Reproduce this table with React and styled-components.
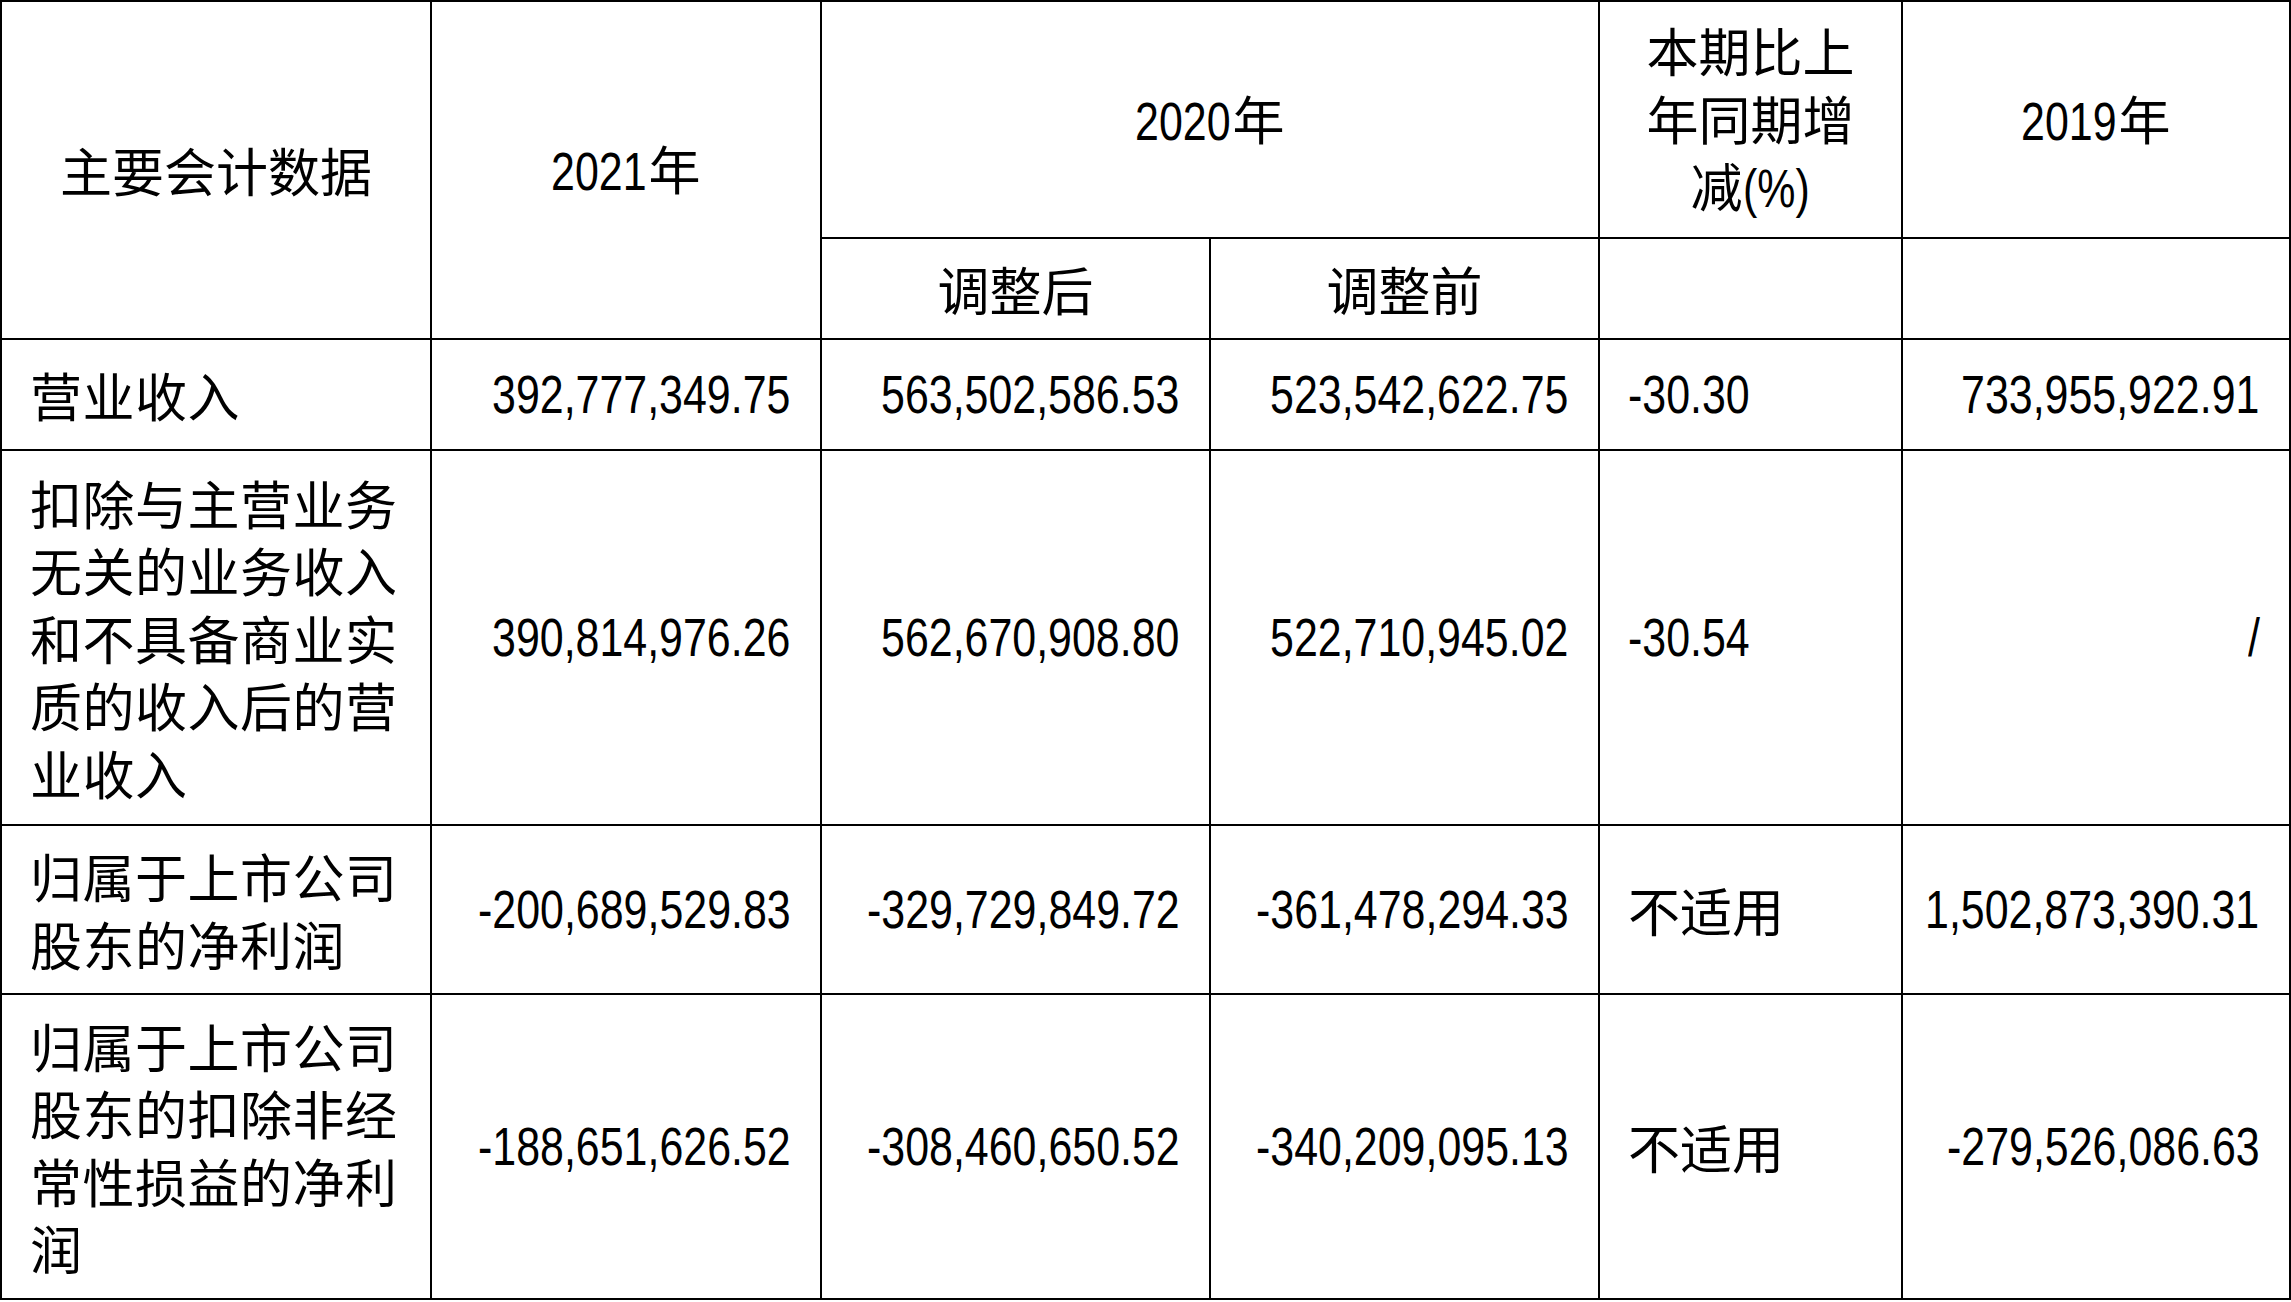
import React, { useLayoutEffect, useRef, useState } from 'react';
import styled, { createGlobalStyle } from 'styled-components';

const GlobalStyle = createGlobalStyle`
  html, body {
    margin: 0;
    padding: 0;
    background: #fff;
  }
  body {
    font-family: "Noto Sans CJK SC", sans-serif;
    color: #000;
  }
`;

const Sheet = styled.div`
  display: grid;
  grid-template-columns: 428px 388px 387px 387px 301px 386px;
  grid-template-rows: 235px 99px 109px 373px 167px 303px;
  gap: 2px;
  padding: 2px;
  background: #000;
  width: max-content;
`;

const justify = { left: 'flex-start', center: 'center', right: 'flex-end' };

const Cell = styled.div`
  background: #fff;
  display: flex;
  align-items: center;
  justify-content: ${p => justify[p.$align || 'left']};
  text-align: ${p => p.$align || 'left'};
  padding: ${p => (p.$label ? '0 20px 0 28px' : '0 28px')};
  grid-column: ${p => p.$col || 'auto'};
  grid-row: ${p => p.$row || 'auto'};
  font-size: 52px;
  line-height: 67.5px;
`;

const Label = styled.span`
  letter-spacing: 0.5px;
`;

// Arial Narrow look: Liberation Sans squeezed horizontally
const SQUEEZE = 0.81;

const NarrowBox = styled.span`
  display: inline-block;
  white-space: nowrap;
  font-family: "Liberation Sans", Arial, sans-serif;
  font-size: 53px;
  vertical-align: baseline;
`;

const NarrowInner = styled.span`
  display: inline-block;
  transform: scaleX(${SQUEEZE});
  transform-origin: left center;
`;

const Narrow = ({ children }) => {
  const ref = useRef(null);
  const [width, setWidth] = useState(null);
  useLayoutEffect(() => {
    // bounding rect already includes the scaleX transform
    if (ref.current) setWidth(Math.ceil(ref.current.getBoundingClientRect().width) + 1);
  }, [children]);
  return (
    <NarrowBox style={width ? { width } : undefined}>
      <NarrowInner ref={ref}>{children}</NarrowInner>
    </NarrowBox>
  );
};

const rows = [
  {
    label: '营业收入',
    values: ['392,777,349.75', '563,502,586.53', '523,542,622.75'],
    change: '-30.30',
    prior: '733,955,922.91',
  },
  {
    label: '扣除与主营业务无关的业务收入和不具备商业实质的收入后的营业收入',
    values: ['390,814,976.26', '562,670,908.80', '522,710,945.02'],
    change: '-30.54',
    prior: '/',
  },
  {
    label: '归属于上市公司股东的净利润',
    values: ['-200,689,529.83', '-329,729,849.72', '-361,478,294.33'],
    change: '不适用',
    prior: '1,502,873,390.31',
  },
  {
    label: '归属于上市公司股东的扣除非经常性损益的净利润',
    values: ['-188,651,626.52', '-308,460,650.52', '-340,209,095.13'],
    change: '不适用',
    prior: '-279,526,086.63',
  },
];

const isNumeric = s => /^[-\d,./]+$/.test(s);

const App = () => {
  return (
    <>
      <GlobalStyle />
      <Sheet>
        <Cell $align="center" $row="1 / span 2">主要会计数据</Cell>
        <Cell $align="center" $row="1 / span 2">
          <span><Narrow>2021</Narrow>年</span>
        </Cell>
        <Cell $align="center" $col="3 / span 2">
          <span><Narrow>2020</Narrow>年</span>
        </Cell>
        <Cell $align="center">
          <span>本期比上年同期增减<Narrow>(%)</Narrow></span>
        </Cell>
        <Cell $align="center">
          <span><Narrow>2019</Narrow>年</span>
        </Cell>
        <Cell $align="center">调整后</Cell>
        <Cell $align="center">调整前</Cell>
        <Cell />
        <Cell />

        {rows.map(row => (
          <React.Fragment key={row.label}>
            <Cell $label>
              <Label>{row.label}</Label>
            </Cell>
            {row.values.map((v, i) => (
              <Cell key={i} $align="right">
                <Narrow>{v}</Narrow>
              </Cell>
            ))}
            <Cell>
              {isNumeric(row.change) ? <Narrow>{row.change}</Narrow> : <span>{row.change}</span>}
            </Cell>
            <Cell $align="right">
              <Narrow>{row.prior}</Narrow>
            </Cell>
          </React.Fragment>
        ))}
      </Sheet>
    </>
  );
};

export default App;
